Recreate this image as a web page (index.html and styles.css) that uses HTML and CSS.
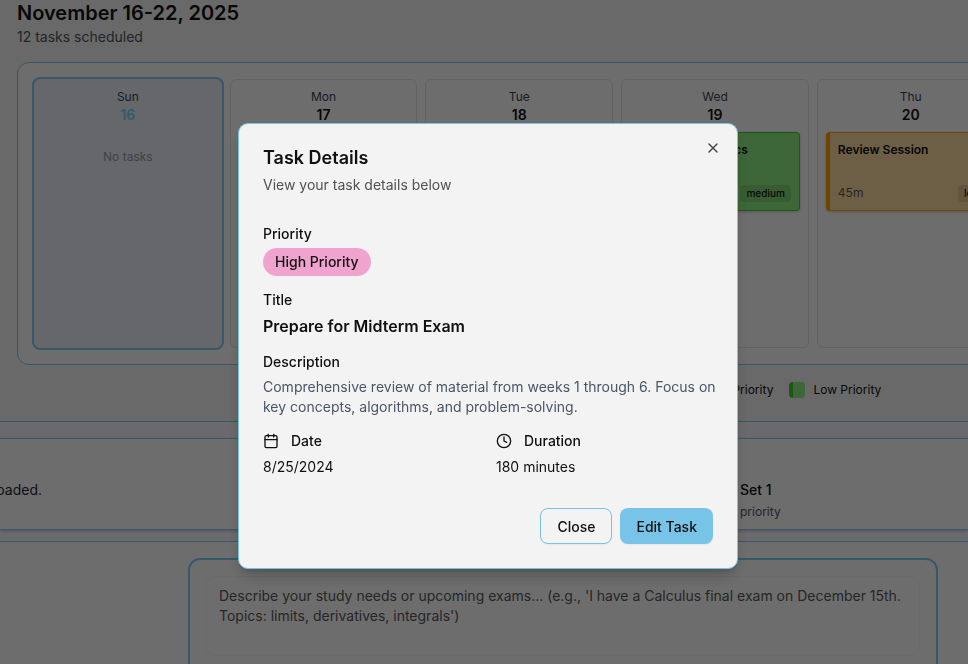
FILE: index.html
```html
<!DOCTYPE html>
<html lang="en">
<head>
  <meta charset="UTF-8" />
  <meta name="viewport" content="width=device-width, initial-scale=1.0" />
  <title>Study Planner</title>
  <link rel="stylesheet" href="styles.css">
</head>
<body>
  <div class="page">
    <!-- Weekly calendar -->
    <section class="calendar">
      <h1>November 16-22, 2025</h1>
      <p class="count">12 tasks scheduled</p>

      <div class="week">
        <div class="day today">
          <span class="day-name">Sun</span>
          <span class="day-number">16</span>
          <p class="empty">No tasks</p>
        </div>
        <div class="day">
          <span class="day-name">Mon</span>
          <span class="day-number">17</span>
        </div>
        <div class="day">
          <span class="day-name">Tue</span>
          <span class="day-number">18</span>
        </div>
        <div class="day">
          <span class="day-name">Wed</span>
          <span class="day-number">19</span>
          <div class="event green">
            <strong class="event-right">Statistics</strong>
            <div class="event-meta"><span></span><span class="tag">medium</span></div>
          </div>
        </div>
        <div class="day">
          <span class="day-name">Thu</span>
          <span class="day-number">20</span>
          <div class="event orange">
            <strong>Review Session</strong>
            <div class="event-meta"><span>45m</span><span class="tag">low</span></div>
          </div>
        </div>
        <div class="day"></div>
        <div class="day"></div>
      </div>

      <div class="legend">
        <span class="legend-item"><i class="swatch pink"></i>High Priority</span>
        <span class="legend-item"><i class="swatch orange"></i>Medium Priority</span>
        <span class="legend-item"><i class="swatch green"></i>Low Priority</span>
      </div>
    </section>

    <!-- Uploads and upcoming work -->
    <section class="summary">
      <p class="uploads">oaded.</p>
      <div class="upcoming">
        <strong>Set 1</strong>
        <span>priority</span>
      </div>
    </section>

    <!-- Study request -->
    <section class="request">
      <div class="composer">
        <textarea aria-label="Study needs" placeholder="Describe your study needs or upcoming exams... (e.g., 'I have a Calculus final exam on December 15th. Topics: limits, derivatives, integrals')"></textarea>
      </div>
    </section>
  </div>

  <!-- Task details dialog -->
  <div class="overlay">
    <div class="dialog" role="dialog" aria-modal="true" aria-labelledby="dialog-title">
      <button class="dismiss" type="button" aria-label="Dismiss">
        <svg width="16" height="16" viewBox="0 0 24 24" fill="none" stroke="currentColor" stroke-width="2" stroke-linecap="round" stroke-linejoin="round"><path d="M18 6 6 18"/><path d="m6 6 12 12"/></svg>
      </button>
      <h2 id="dialog-title">Task Details</h2>
      <p class="subtitle">View your task details below</p>

      <div class="fields">
        <div class="field">
          <h3>Priority</h3>
          <span class="badge">High Priority</span>
        </div>
        <div class="field">
          <h3>Title</h3>
          <p class="task-title">Prepare for Midterm Exam</p>
        </div>
        <div class="field">
          <h3>Description</h3>
          <p class="description">Comprehensive review of material from weeks 1 through 6. Focus on<br>key concepts, algorithms, and problem-solving.</p>
        </div>
        <div class="facts">
          <div class="field">
            <h3>
              <svg width="16" height="16" viewBox="0 0 24 24" fill="none" stroke="currentColor" stroke-width="2" stroke-linecap="round" stroke-linejoin="round"><path d="M8 2v4"/><path d="M16 2v4"/><rect width="18" height="18" x="3" y="4" rx="2"/><path d="M3 10h18"/></svg>
              Date
            </h3>
            <p>8/25/2024</p>
          </div>
          <div class="field">
            <h3>
              <svg width="16" height="16" viewBox="0 0 24 24" fill="none" stroke="currentColor" stroke-width="2" stroke-linecap="round" stroke-linejoin="round"><circle cx="12" cy="12" r="10"/><path d="M12 6v6l4 2"/></svg>
              Duration
            </h3>
            <p>180 minutes</p>
          </div>
        </div>
      </div>

      <div class="actions">
        <button class="btn" type="button">Close</button>
        <button class="btn primary" type="button">Edit Task</button>
      </div>
    </div>
  </div>
</body>
</html>
```

FILE: styles.css
```css
* {
  box-sizing: border-box;
}
body {
  margin: 0;
  font-family: Inter, "Liberation Sans", sans-serif;
  font-size: 14px;
  line-height: 20px;
  color: #101010;
  background: #e9e9f4;
}
h1, h2, h3, p {
  margin: 0;
}
button, textarea {
  font: inherit;
  color: inherit;
}
.page {
  height: 100vh;
  overflow: hidden;
}

/* Calendar */
.calendar {
  padding: 0 17px 21px;
  background: #e9e9e9;
  border-bottom: 1px solid #78c4e8;
}
h1 {
  font-size: 20px;
  line-height: 27px;
  font-weight: 600;
}
.count {
  color: #4a5160;
}
.week {
  display: grid;
  grid-template-columns: repeat(7, 1fr);
  gap: 8px;
  width: 1396px;
  margin-top: 15px;
  padding: 16px;
  background: #f2f2f2;
  border: 1px solid #78c4e8;
  border-radius: 12px;
}
.day {
  display: flex;
  flex-direction: column;
  min-height: 269px;
  padding: 8px;
  border: 1px solid #d9d9d9;
  border-radius: 6px;
}
.today {
  background: #dfe4ee;
  border-color: #dfe4ee;
  box-shadow: 0 0 0 2px #78c4e8;
}
.day-name {
  font-size: 12px;
  line-height: 18px;
  text-align: center;
  color: #374151;
}
.day-number {
  line-height: 18px;
  font-weight: 600;
  text-align: center;
}
.today .day-number {
  color: #78c4e8;
}
.empty {
  margin-top: 23px;
  font-size: 12px;
  text-align: center;
  color: #8d939e;
}
.event {
  display: flex;
  flex-direction: column;
  justify-content: space-between;
  height: 79px;
  margin-top: 8px;
  padding: 8px;
  font-size: 12px;
  line-height: 18px;
  border: 1px solid;
  border-left-width: 4px;
  border-radius: 4px;
  box-shadow: 0 1px 3px rgba(0, 0, 0, 0.2);
}
.event strong {
  font-weight: 600;
}
.event-right {
  padding-right: 43px;
  text-align: right;
}
.event-meta {
  display: flex;
  align-items: center;
  justify-content: space-between;
  color: #555555;
}
.tag {
  padding: 1px 6px;
  font-size: 10px;
  line-height: 15px;
  font-weight: 500;
  color: #101010;
  background: rgba(0, 0, 0, 0.1);
  border-radius: 4px;
}
.green {
  background: #88e57c;
  border-color: #3fc422;
}
.orange {
  background: #efd29c;
  border-color: #f59700;
}
.pink {
  background: #f0a3cf;
  border-color: #d94a9b;
}
.legend {
  display: flex;
  justify-content: center;
  gap: 16px;
  width: 1396px;
  margin-top: 15px;
  font-size: 12px;
}
.legend-item {
  display: flex;
  align-items: center;
  gap: 8px;
}
.swatch {
  width: 16px;
  height: 16px;
  border-left-width: 4px;
  border-left-style: solid;
  border-radius: 4px;
}

/* Summary */
.summary {
  display: grid;
  grid-template-columns: 42px 1fr;
  column-gap: 698px;
  height: 92px;
  margin-top: 16px;
  padding-top: 41px;
  background: #f2f2f2;
  border: solid #78c4e8;
  border-width: 1px 0;
  box-shadow: 0 1px 3px rgba(0, 0, 0, 0.2);
}
.uploads {
  display: flex;
  justify-content: flex-end;
  color: #1f2937;
}
.upcoming strong {
  display: block;
  font-weight: 500;
}
.upcoming span {
  font-size: 12px;
  line-height: 24px;
  color: #4a5160;
}

/* Request */
.request {
  margin-top: 11px;
  padding: 16px 30px 16px 188px;
  background: #f2f2f2;
  border-top: 1px solid #78c4e8;
}
.composer {
  height: 140px;
  padding: 16px;
  border: 2px solid #78c4e8;
  border-radius: 12px;
}
textarea {
  display: block;
  width: 100%;
  height: 80px;
  padding: 9px 12px;
  background: transparent;
  border: 1px solid #eaeaea;
  border-radius: 8px;
  resize: none;
}
textarea::placeholder {
  color: #555555;
}

/* Dialog */
.overlay {
  position: fixed;
  inset: 0;
  display: flex;
  align-items: center;
  justify-content: center;
  padding: 28px 0 0 8px;
  background: rgba(0, 0, 0, 0.55);
}
.dialog {
  position: relative;
  width: 500px;
  padding: 24px;
  background: #f3f3f3;
  border: 1px solid #78c4e8;
  border-radius: 10px;
  box-shadow: 0 10px 15px -3px rgba(0, 0, 0, 0.2), 0 4px 6px -4px rgba(0, 0, 0, 0.2);
}
.dismiss {
  position: absolute;
  top: 16px;
  right: 16px;
  display: flex;
  padding: 0;
  color: #444444;
  background: none;
  border: 0;
  cursor: pointer;
}
h2 {
  font-size: 18px;
  line-height: 20px;
  font-weight: 600;
}
.subtitle {
  margin-top: 7px;
  color: #505050;
}
.fields {
  display: flex;
  flex-direction: column;
  gap: 14px;
  margin-top: 29px;
}
.field {
  display: flex;
  flex-direction: column;
  align-items: flex-start;
  gap: 4px;
}
h3 {
  display: flex;
  align-items: center;
  gap: 12px;
  font-size: 14px;
  font-weight: 500;
}
.badge {
  padding: 4px 12px;
  font-weight: 500;
  background: #f0a3cf;
  border-radius: 14px;
}
.task-title {
  font-size: 16px;
  line-height: 24px;
  font-weight: 600;
}
.description {
  margin-top: 1px;
  white-space: nowrap;
  color: #4a5568;
}
.facts {
  display: grid;
  grid-template-columns: 1fr 1fr;
  gap: 16px;
}
.facts .field {
  gap: 6px;
}
.actions {
  display: flex;
  justify-content: flex-end;
  gap: 8px;
  margin-top: 31px;
}
.btn {
  height: 36px;
  padding: 1px 16px 0;
  font-weight: 500;
  background: #f3f3f3;
  border: 1px solid #78c4e8;
  border-radius: 8px;
  box-shadow: 0 1px 2px rgba(0, 0, 0, 0.05);
  cursor: pointer;
}
.primary {
  background: #78c4e8;
  border: 0;
}
```
